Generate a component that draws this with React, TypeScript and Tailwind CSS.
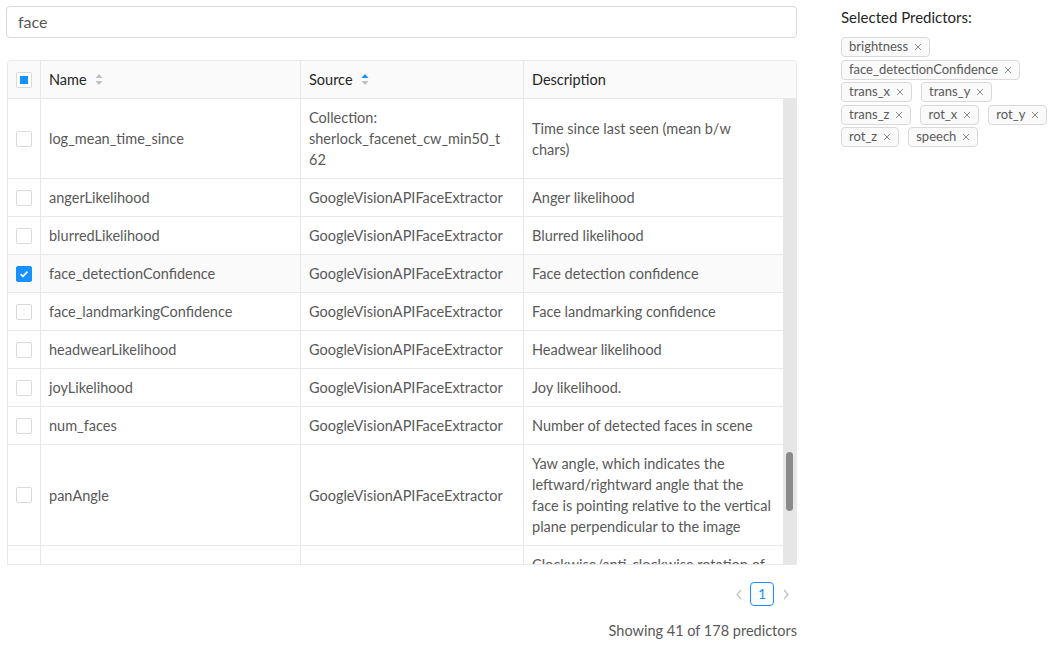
import React from 'react';

type Row = {
  name: string;
  source: React.ReactNode;
  description: React.ReactNode;
  checked?: boolean;
};

const GV = 'GoogleVisionAPIFaceExtractor';

const rows: Row[] = [
  {
    name: 'log_mean_time_since',
    source: (
      <>
        Collection:
        <br />
        sherlock_facenet_cw_min50_t
        <br />
        62
      </>
    ),
    description: (
      <>
        Time since last seen (mean b/w
        <br />
        chars)
      </>
    ),
  },
  { name: 'angerLikelihood', source: GV, description: 'Anger likelihood' },
  { name: 'blurredLikelihood', source: GV, description: 'Blurred likelihood' },
  {
    name: 'face_detectionConfidence',
    source: GV,
    description: 'Face detection confidence',
    checked: true,
  },
  {
    name: 'face_landmarkingConfidence',
    source: GV,
    description: 'Face landmarking confidence',
  },
  { name: 'headwearLikelihood', source: GV, description: 'Headwear likelihood' },
  { name: 'joyLikelihood', source: GV, description: 'Joy likelihood.' },
  { name: 'num_faces', source: GV, description: 'Number of detected faces in scene' },
  {
    name: 'panAngle',
    source: GV,
    description: (
      <>
        Yaw angle, which indicates the
        <br />
        leftward/rightward angle that the
        <br />
        face is pointing relative to the vertical
        <br />
        plane perpendicular to the image
      </>
    ),
  },
  {
    name: 'rollAngle',
    source: GV,
    description: (
      <>
        Clockwise/anti-clockwise rotation of
        <br />
        the face relative to the image vertical
        <br />
        about the axis perpendicular to the
        <br />
        face
      </>
    ),
  },
];

const selected = [
  'brightness',
  'face_detectionConfidence',
  'trans_x',
  'trans_y',
  'trans_z',
  'rot_x',
  'rot_y',
  'rot_z',
  'speech',
];

const Checkbox = ({ checked }: { checked?: boolean }) =>
  checked ? (
    <span className="w-4 h-4 rounded-[2px] bg-[#1890ff] border border-[#1890ff] flex items-center justify-center">
      <svg width="10" height="10" viewBox="0 0 10 10">
        <path d="M1.6 5.2 L4 7.4 L8.4 2.6" fill="none" stroke="white" strokeWidth="1.6" />
      </svg>
    </span>
  ) : (
    <span className="w-4 h-4 rounded-[2px] bg-white border border-[#d9d9d9]" />
  );

const SortIcon = ({ active }: { active?: 'up' | 'down' }) => (
  <svg width="8" height="13" viewBox="0 0 8 13" className="ml-2">
    <path d="M4 1 L7.5 5 L0.5 5 Z" fill={active === 'up' ? '#1890ff' : '#bfbfbf'} />
    <path d="M4 12 L7.5 8 L0.5 8 Z" fill={active === 'down' ? '#1890ff' : '#bfbfbf'} />
  </svg>
);

const Chevron = ({ dir }: { dir: 'left' | 'right' }) => (
  <svg width="8" height="11" viewBox="0 0 8 11">
    <path
      d={dir === 'left' ? 'M6 1 L2 5.5 L6 10' : 'M2 1 L6 5.5 L2 10'}
      fill="none"
      stroke="#bfbfbf"
      strokeWidth="1.2"
    />
  </svg>
);

const cols = 'grid grid-cols-[33px_260px_223px_1fr]';

export default function App() {
  return (
    <div
      className="flex w-[1059px] h-[651px] bg-white text-[#595959]"
      style={{ fontFamily: 'Lato, "Noto Sans", sans-serif' }}
    >
      {/* Main column */}
      <div className="w-[797px] pl-[6px] pt-[6px] flex flex-col">
        <div className="h-8 border border-[#d9d9d9] rounded-[4px] flex items-center px-[11px] text-[16px] text-[#595959]">
          face
        </div>

        {/* Table */}
        <div className="mt-[22px] ml-px border border-[#e8e8e8] rounded-t-[4px] overflow-hidden">
          <div className={`${cols} h-[38px] bg-[#fafafa] border-b border-[#e8e8e8] text-[#262626] text-[14.5px]`}>
            <div className="flex items-center pl-2 border-r border-[#e8e8e8]">
              <span className="w-4 h-4 rounded-[2px] bg-white border border-[#d9d9d9] flex items-center justify-center">
                <span className="w-2 h-2 bg-[#1890ff]" />
              </span>
            </div>
            <div className="flex items-center px-2 border-r border-[#e8e8e8]">
              Name
              <SortIcon />
            </div>
            <div className="flex items-center px-2 border-r border-[#e8e8e8]">
              Source
              <SortIcon active="up" />
            </div>
            <div className="flex items-center px-2">Description</div>
          </div>

          <div className="flex h-[465px]">
            <div className="flex-1 overflow-hidden text-[14.5px] leading-[21px]">
              {rows.map((r) => (
                <div
                  key={r.name}
                  className={`${cols} border-b border-[#e8e8e8] ${r.checked ? 'bg-[#fafafa]' : 'bg-white'}`}
                >
                  <div className="flex items-center pl-2 border-r border-[#e8e8e8]">
                    <Checkbox checked={r.checked} />
                  </div>
                  <div className="flex items-center px-2 py-2 border-r border-[#e8e8e8]">{r.name}</div>
                  <div className="flex items-center px-2 py-2 border-r border-[#e8e8e8]">{r.source}</div>
                  <div className="flex items-center pl-2 pr-[6px] py-2 whitespace-nowrap">{r.description}</div>
                </div>
              ))}
            </div>
            {/* Scrollbar */}
            <div className="w-[13px] bg-[#e6e6e6] flex justify-center">
              <div className="w-[7px] h-[59px] mt-[353px] rounded-[4px] bg-[#8a8a8a]" />
            </div>
          </div>
        </div>

        {/* Pagination */}
        <div className="flex justify-end items-center mt-[17px] text-[14px] leading-6">
          <Chevron dir="left" />
          <span className="ml-[7px] w-6 h-6 border border-[#1890ff] rounded-[4px] text-[#1890ff] flex items-center justify-center">
            1
          </span>
          <span className="ml-[8px] mr-[7px] flex">
            <Chevron dir="right" />
          </span>
        </div>
        <div className="text-right mt-[15px] text-[14.5px] leading-[20px]">Showing 41 of 178 predictors</div>
      </div>

      {/* Side panel */}
      <div className="pl-[44px] pt-[7px] w-[262px]">
        <div className="text-[15px] text-[#262626] leading-[20px]">Selected Predictors:</div>
        <div className="flex flex-wrap gap-x-[9px] gap-y-[2.5px] mt-[10px] w-[215px]">
          {selected.map((s) => (
            <span
              key={s}
              className="h-[20px] px-[7px] flex items-center gap-[6px] text-[13px] bg-[#fafafa] border border-[#d9d9d9] rounded-[4px] text-[#595959]"
            >
              {s}
              <svg width="8" height="8" viewBox="0 0 8 8">
                <path d="M1 1 L7 7 M7 1 L1 7" stroke="#8c8c8c" strokeWidth="1" />
              </svg>
            </span>
          ))}
        </div>
      </div>
    </div>
  );
}
